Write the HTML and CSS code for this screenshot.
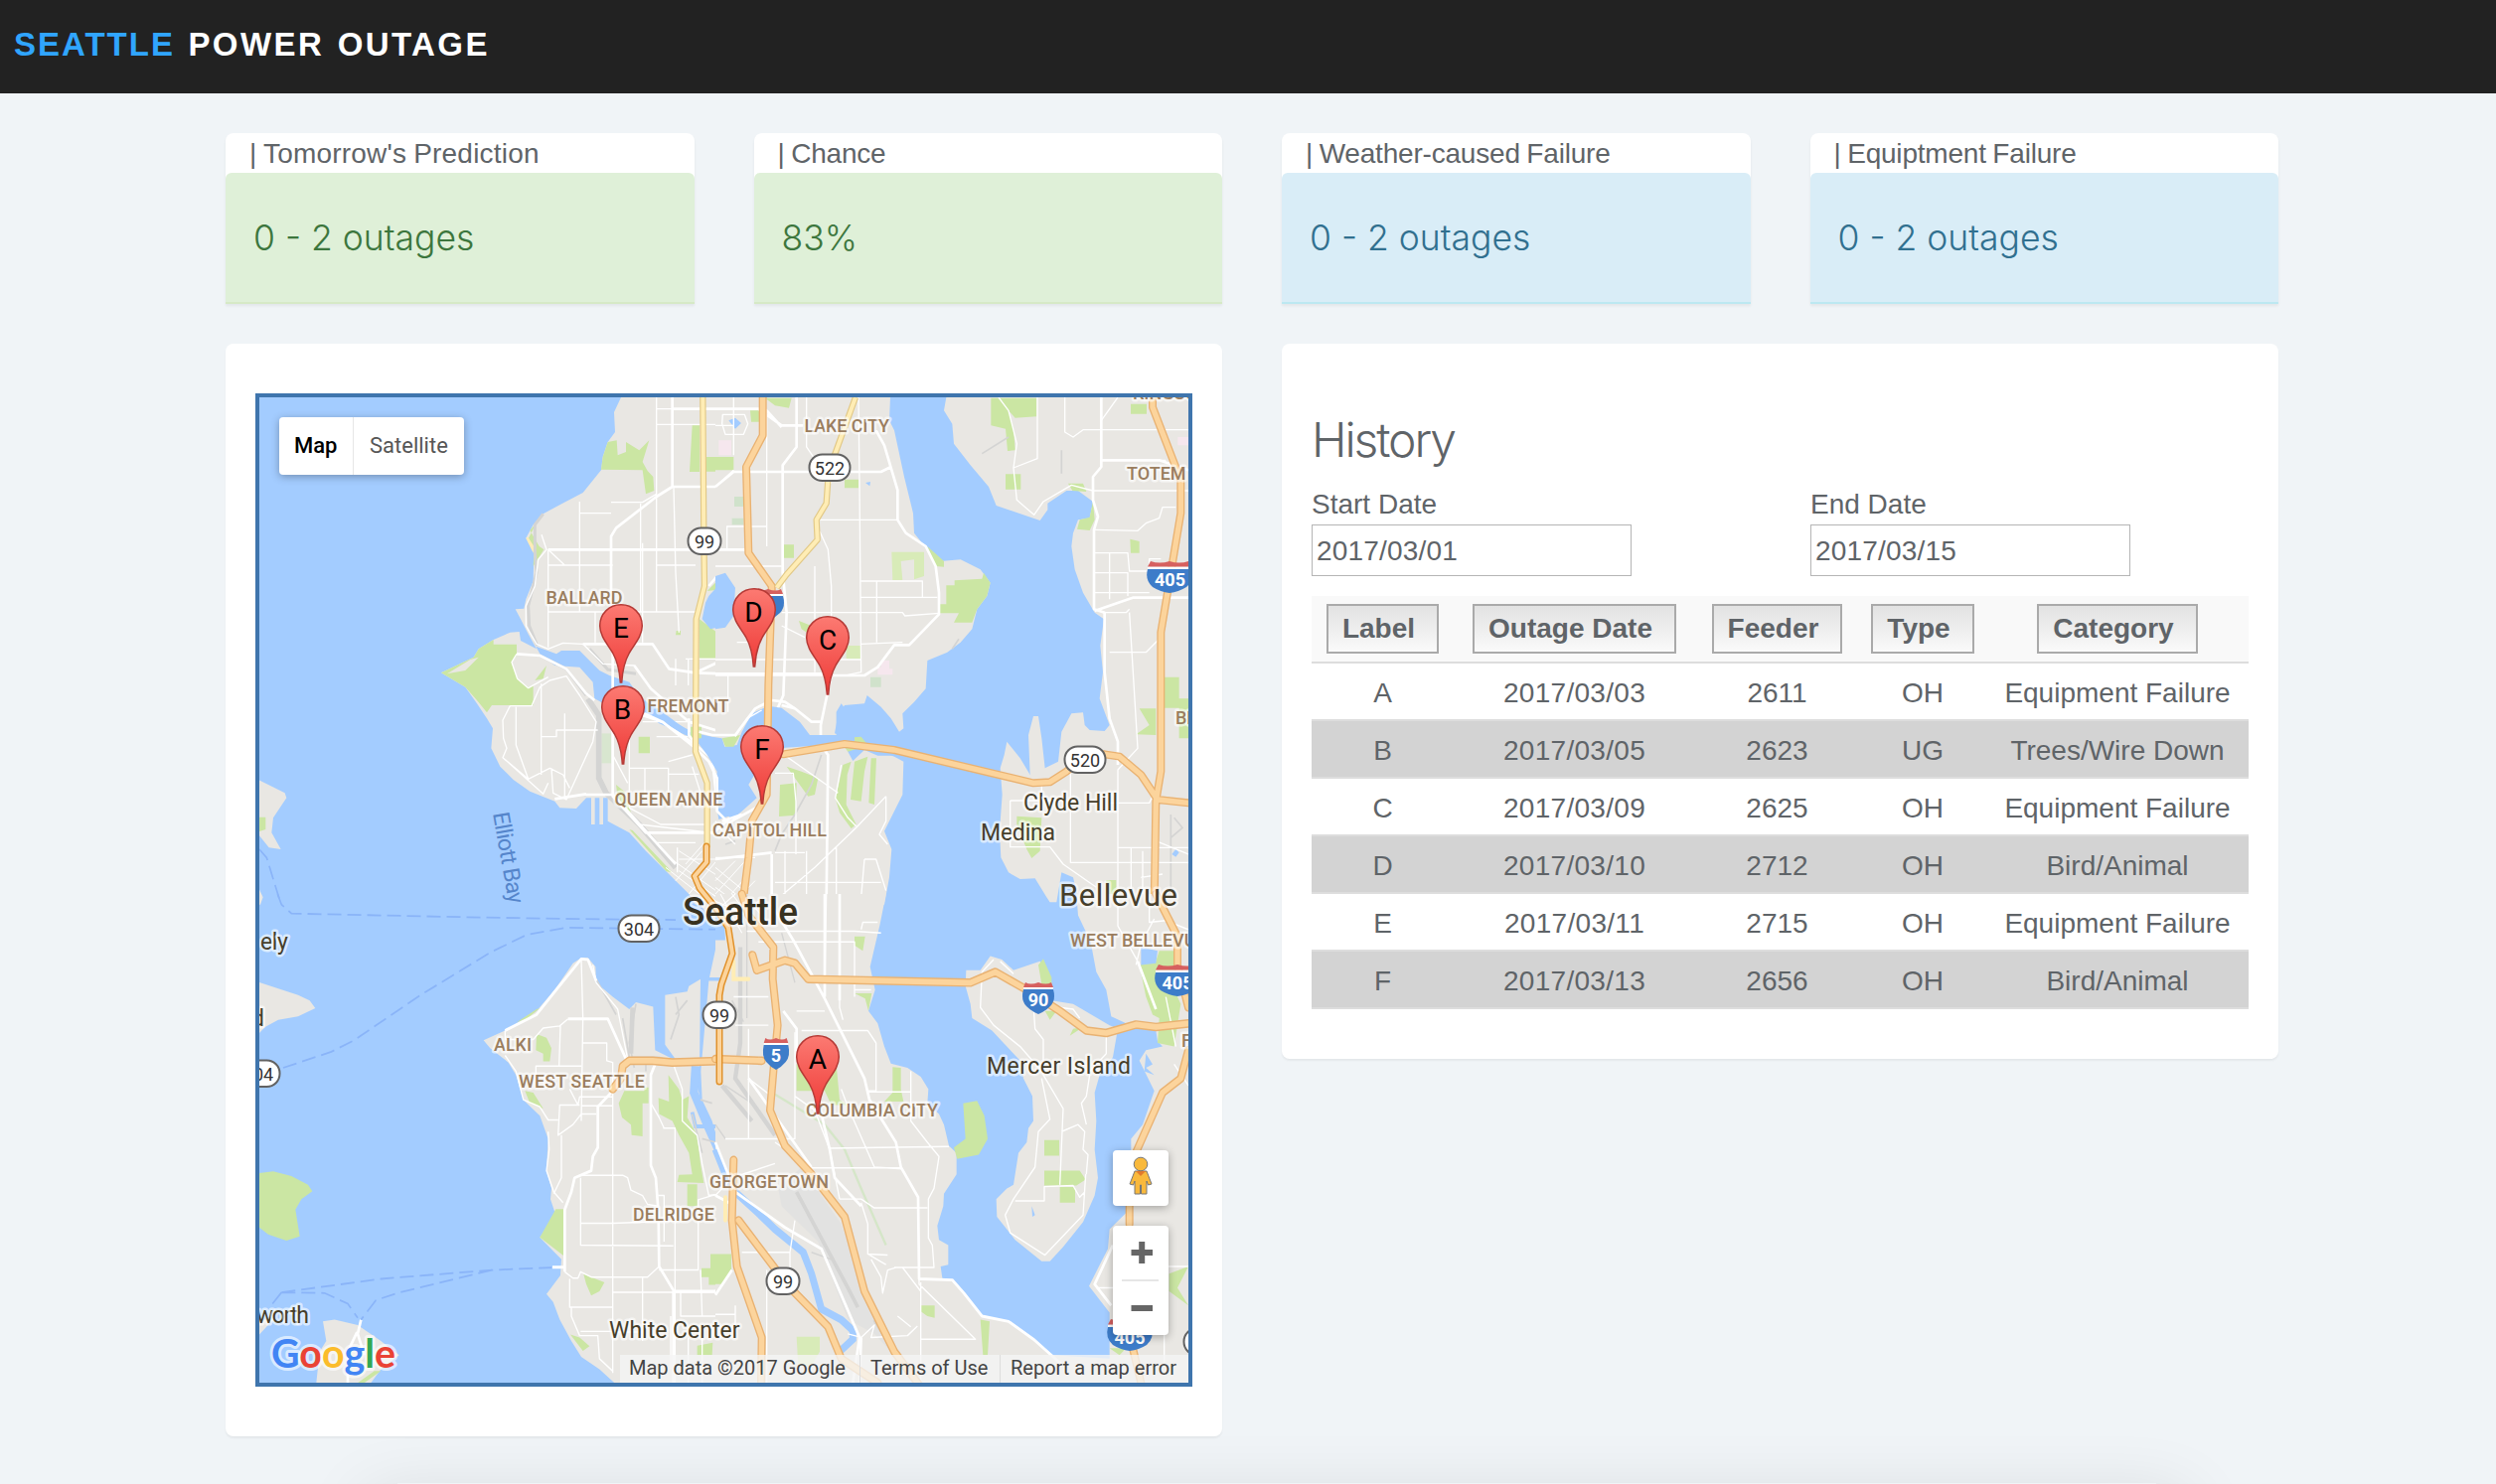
FILE: index.html
```html
<!DOCTYPE html>
<html lang="en">
<head>
<meta charset="utf-8">
<title>Seattle Power Outage</title>
<link rel="stylesheet" href="styles.css">
</head>
<body>
<header class="topbar"><span class="brand"><span class="brand-city">SEATTLE</span> POWER OUTAGE</span></header>
<main class="content">
  <section class="stats">
    <article class="stat"><h2 class="stat-title wide">| Tomorrow's Prediction</h2><p class="stat-value success">0 - 2 outages</p></article>
    <article class="stat"><h2 class="stat-title">| Chance</h2><p class="stat-value success">83%</p></article>
    <article class="stat"><h2 class="stat-title">| Weather-caused Failure</h2><p class="stat-value info">0 - 2 outages</p></article>
    <article class="stat"><h2 class="stat-title">| Equiptment Failure</h2><p class="stat-value info">0 - 2 outages</p></article>
  </section>
  <section class="panels">
    <div class="panel map-panel">
      <div class="map">
        <svg class="map-canvas" viewBox="261 400 935 992" width="935" height="992">
          <defs>
            <linearGradient id="pinFill" x1="0" y1="0" x2="0" y2="1"><stop offset="0" stop-color="#fc7a72"/><stop offset="1" stop-color="#ee3a37"/></linearGradient>
            <g id="pin"><path d="M0 .7C12 .7 21.3 10 21.3 22C21.3 32 14 40 8.500 49C4 57 1.500 66 .7 79H-.7C-1.500 66 -4 57 -8.500 49C-14 40 -21.300 32 -21.300 22C-21.300 10 -12 .7 0 .7Z" fill="url(#pinFill)" stroke="#b53a36" stroke-width="1.500"/></g>
            <g id="shield"><path d="M-15 7Q-18 18 -12 24Q-7 29 0 32Q7 29 12 24Q18 18 15 7Z" fill="#3d7cc9"/><path d="M-15 7V5H15V7Z" fill="#fff"/><path d="M-15 5L-13 0Q-8 3 0 0Q8 3 13 0L15 5Z" fill="#d6605f"/></g>
            <g id="shieldWide"><path d="M-22 8Q-25 19 -17 26Q-9 31 0 32Q9 31 17 26Q25 19 22 8Z" fill="#3d7cc9"/><path d="M-22 8V5.500H22V8Z" fill="#fff"/><path d="M-22 5.500L-19 0Q-10 3 0 0Q10 3 19 0L22 5.500Z" fill="#d6605f"/></g>
          </defs>
          <rect x="261" y="400" width="935" height="992" fill="#a3ccff"/>

          <!-- northwest: Ballard, Magnolia, Queen Anne -->
          <g transform="translate(250 390) scale(.33333)">
            <path class="land" d="M1125 30L1104 75 1107 135 1085 165 1070 210 1065 250 1010 318 940 355 890 382 860 415 838 455 862 500 860 585 838 640 832 668 806 670 822 700 845 745 870 790 822 765 818 738 790 740 740 762 695 790 680 815 582 862 655 905 690 955 720 1000 738 1030 733 1090 760 1145 800 1185 850 1220 925 1250 940 1270 990 1272 1020 1240 1035 1240V1320H1046V1240H1060V1320H1071V1240H1085V1310L1150 1345 1200 1400 1290 1490 1330 1530 1350 1562H1440V30Z"/>
            <path class="land" d="M30 1185L110 1225 115 1240 75 1300 70 1345 98 1395 62 1390 30 1350ZM30 1510L44 1540 36 1562H30Z"/>
            <path class="park" d="M582 862L680 815 695 790 740 762V776H810V810L795 830 812 880 845 905 860 900V960H735L720 982 690 945 655 905ZM1112 160L1085 165 1070 210 1065 248 1190 250 1200 322 1225 312 1222 270 1205 252 1190 225 1210 160 1180 190 1140 165V195L1115 205ZM870 408L850 432 878 480 892 490 860 540 862 500 846 455ZM1340 115H1362V255H1332ZM1383 210H1440V254H1383ZM1362 700L1415 740 1410 818H1362ZM1385 615L1440 560V575L1410 612ZM1178 1055H1212V1105H1178ZM30 1298H52V1335L30 1342ZM865 885L900 840 890 880ZM1292 735H1305V748H1290ZM1110 1200L1135 1220 1155 1285 1140 1280 1115 1240ZM1150 1335L1160 1338 1280 1465 1262 1462Z"/>
            <path d="M1066 1045H1096V1135H1066Z" fill="#d8e6cf"/>
            <path d="M838 455L860 500 862 480 844 452Z" fill="#ffecb8"/>
            <path d="M600 865L670 822 695 815 655 855Z" class="land"/>
            <path d="M868 782L930 805 945 795 1000 795 1035 830 1060 855 1090 870 1150 890 1175 925 1240 985 1330 1035 1320 1050 1240 1015 1160 960 1100 970 1045 940 1040 890 1000 845 925 840 880 805Z" fill="#a3ccff"/>
            <path d="M1390 630L1440 575V720L1395 730 1370 700 1380 650Z" fill="#a3ccff"/>
            <path class="rail" stroke-width="9" d="M890 382L865 415V500L870 560 845 660 848 720 872 780M880 810L960 850 1020 930M1030 790L1085 852 1170 865"/>
            <path class="rail" stroke-width="17" d="M1025 940L1058 990V1180L1080 1225 1180 1320 1290 1450"/>
            <path class="road" d="M1232 30V680M1184 350V680M1000 345V678M1000 380H1095M1095 347H1190L1232 322M1232 65H1280M1232 112H1440M1100 537H905M905 490V785M905 678H1350M1047 678V770M1284 300L1290 560 1300 740M1190 470V770M1320 820H1440M905 490L955 537M1232 537H1350M885 445L900 490 875 520 865 600 838 660 838 720 870 775 905 790 950 772 1010 775 1070 835 1165 840 1215 910M884 895V1170M884 1055H930V1035H1055M930 1035V1055M790 962H855L880 905 910 885 960 872 1000 930 1050 1010 1040 1070 960 1245 920 1225 915 1150M790 962L768 1005 770 1060 780 1090 768 1118 845 1183 910 1150 950 1170 970 1210M808 965V1080L845 1183M810 805L795 830 812 880 845 908 905 875M955 1150V1240M955 985V1150M1100 1110L1145 1195M1150 1055V1270M1150 1150H1268V1240M1268 1130L1340 1110M1197 1150V1250M1232 1055H1330M1268 1168H1360M1150 1270L1245 1320H1390M1232 1375H1350M1180 1320L1440 1350M1295 1390V1465M1290 900V820M1328 820V900M768 1118L890 1228 905 1195M1190 1010H1340M1340 1145L1370 1240"/>
            <path class="road fine" d="M1270 1420L1440 1540M1300 1400L1440 1490M1320 1440L1390 1360M1290 1490L1370 1400M1330 1530L1430 1410M1300 1425H1440M1260 1450L1400 1560M1300 1460L1400 1530"/>
            <path class="road main" d="M1280 30V300L1232 330 1110 425 1095 450V615M1100 690V1235L1200 1345H1440M1280 65H1440M1284 300H1440M905 490H1440M1010 775H1220L1270 850 1350 862 1440 820M1165 840L1215 910 1330 1010 1440 1045M1100 960L1250 1010 1350 1080 1400 1120 1415 1250 1440 1300M810 805L880 810 960 850 1020 925 1045 945M1020 1230H1100L1290 1440M1350 862L1440 865M1390 600L1440 540M1440 200V800M925 1243L1020 1228"/>
            <path class="ferry" d="M33 1395L55 1420 98 1560"/>
          </g>

          <!-- northeast: Lake City, Kirkland, Medina -->
          <g transform="translate(720 390) scale(.33333)">
            <path class="land" d="M0 30H528L525 100 540 130 570 270 597 380 600 440 640 490 680 525 740 520 800 550 830 590 820 630 790 670 775 730 740 770 700 800 640 825 635 910 600 950 565 985 568 1030 555 1040 530 1000 500 965 458 930 450 955 390 960 370 990 360 1045 450 1080 540 1115 568 1130 565 1230 510 1340 532 1395 525 1480 510 1562H0Z"/>
            <path class="land" d="M697 30L690 70 715 110 720 170 770 235 825 300 848 357 980 402 1003 370V350L1060 312H1095L1140 345 1130 395 1095 400 1080 440 1075 480 1085 550 1110 620 1145 680 1173 700 1162 780 1170 860 1160 940 1190 1020 1175 1038 1130 1035 1115 1020 1110 982 1075 985 1045 1040 1035 1130 995 1150 985 1060 975 993H960L945 1050 950 1170 920 1120 880 1070 872 1110 860 1150 866 1230 858 1340 862 1420 885 1465 920 1485 965 1483 1000 1540 1010 1555H1030L1045 1465 1080 1480 1100 1562H1430V30Z"/>
            <path fill="#a3ccff" d="M0 570L30 560 60 605 55 690 30 725 0 730ZM40 100L60 92 78 108 60 125ZM453 288L468 285 466 298ZM1378 1410L1390 1395 1400 1405 1390 1418Z"/>
            <path fill="#a3ccff" d="M400 1070L430 1080 550 1100 560 1112 490 1112 450 1095 415 1128 400 1100Z"/>
            <path class="park" d="M150 32H230L222 62 180 55ZM105 70H132V104H108ZM0 210H55V250H0ZM390 278H432V304H390ZM206 475H237V515H206ZM640 480L690 525V542L665 540ZM722 583L805 578 810 560 830 590 820 630 790 670 775 710H720L735 682H678V655H697V598H722ZM252 705L290 720 305 760 260 730ZM405 780H438V820H400ZM832 32H970V88L905 92 885 70 900 125 905 190 882 192 876 125 832 115ZM876 262H922V308H876ZM1254 50H1302V80H1254ZM1065 290H1110L1120 315 1078 312ZM1140 345L1145 400 1130 432 1092 428 1100 400 1130 392ZM1252 458L1280 465V500H1254ZM1356 875H1400V940H1428V1060H1400V968H1356ZM1280 970H1330V1050L1270 1048 1310 1020ZM215 1145L260 1160 310 1180 300 1230 280 1235ZM195 1200L245 1195 242 1292 192 1296ZM385 1140L410 1130 398 1170 395 1260 425 1320 410 1332 375 1285 362 1240 372 1200ZM420 1130L460 1115 450 1160 440 1250 408 1245ZM470 1120H486L480 1260 463 1255ZM910 1295L985 1300 980 1400 955 1422 940 1395 910 1320ZM370 1060L440 1055 460 1080 400 1100ZM1180 1488H1210V1530H1180ZM1404 1535H1428V1562H1404Z"/>
            <path fill="#d8ebb8" d="M532 497H630V570L600 580V520L560 525 565 582H535ZM395 780H438V820H395Z"/>
            <path fill="#d0e2cb" d="M468 875H500V905H468ZM57 330H85V360H57ZM50 395H85V415H50Z"/>
            <path fill="#f6e7ee" d="M10 160H48V205H10ZM500 825H525V850H535V868H490V845H500ZM1396 150H1428V175H1396Z"/>
            <path class="rail" stroke-width="5" d="M320 1110L290 1200 240 1290 200 1350 180 1400M715 790L735 760M805 200L885 150M1045 190V260M1375 1290V1540M1385 1300L1410 1330 1375 1360M30 1380L60 1370"/>
            <path class="road" d="M55 30V205M55 115H0M155 65V480M22 82H88L98 110 85 142H30L20 110ZM55 250L0 300M155 420H35V490M0 540H200M275 30V180L350 290M432 30L435 290 440 860 400 868M315 400H550M440 585H625V632M440 634H670M200 680H565L572 690 675 682M487 585V770M350 600V860M300 540V860M315 435L340 490 350 600M440 775L565 770M0 822H440M0 870H450M38 870V980M200 720L270 755M65 770H120M180 1165H235L243 1250V1410M215 1115L370 1225M380 1140L362 1240 400 1300 425 1325M515 1235L425 1330 300 1450 170 1560M515 1235V1310L495 1350 520 1380M180 1405H270M0 1420H120M450 1425H485L515 1520M450 1425L440 1540 350 1562M180 1495H500M210 1400V1562M275 1400V1562M365 1390V1562M1055 30V135L1080 150 1110 128H1428M972 30V215L900 243M855 30L885 70 910 170 900 243 910 340 962 385 990 345 1075 295 1140 312H1428M1165 220H1360M1165 100L1215 30M1145 430L1275 433 1300 410 1340 395 1350 362H1390M1145 500H1245L1250 555H1310V518H1345M1190 500V640M1145 560H1245V630M1145 620H1310M1175 680H1240L1250 670M1190 800H1300L1340 760M1250 680L1275 1090 1215 1155V1562M1190 1255H1310L1330 1215M890 1248H1070M890 1248V1388H1010L1050 1440 1150 1510M1072 1160V1435H1428M1215 1390H1428M985 1200V1250M1255 1390V1562M1290 1400V1562M1330 1370L1428 1410M1285 1480L1350 1470"/>
            <path class="road fine" d="M0 1480L100 1562M0 1510L70 1562M0 1450L110 1540M20 1562L100 1470M0 1530L90 1430M50 1562L120 1490M0 1490L60 1430"/>
            <path class="road main" d="M0 65H130L200 115H245V180L203 235V560L215 680 205 930 170 1010M245 30V115M200 115H265M485 130L510 175 550 310V400L575 440 635 480 665 540 675 620V685L585 778H540L490 845 450 870H350L338 925 318 1020V1080L340 1110 335 1560M0 300L55 255H500L530 240M0 490H90M0 865H345M155 70L200 120M200 960L240 970 290 1010 320 1010M170 1410V1560M0 1340L90 1260M1165 30V240L1140 270V340L1155 390 1143 430V670L1175 680V860L1190 1000 1215 1070V1140M1165 220H1340L1428 250M1145 675L1260 635H1428M0 1425L170 1405"/>
          </g>

          <!-- Lake Union and Portage Bay, with the roads along them -->
          <g transform="translate(560 590) scale(.33333)">
            <path fill="#a3ccff" d="M250 350L300 365 400 440 470 455 500 460 508 485 545 480 560 440 590 385 640 362 680 368 735 410 765 450H850L900 470 850 478 690 488 650 520 600 540 598 570 580 600 605 640 560 680 530 705 520 695 490 705 480 640 485 560 455 510 425 470 400 455 300 400Z"/>
            <path fill="#a3ccff" d="M845 470V380L860 355 870 368 900 365V470Z"/>
            <path class="park" d="M500 460L555 450 535 485H510ZM405 425H438V460H405Z"/>
            <path class="road main" d="M430 440L470 450H540L570 410 600 370 650 345 690 350 720 370M265 385L320 410 420 490 460 530 485 580V680L520 715 620 660M400 400V450L420 480M560 690L500 710"/>
            <path class="road" d="M540 455L575 400 620 375M480 710L500 740 540 780"/>
          </g>

          <g transform="translate(720 390) scale(.33333)">
            <path class="orange-edge" d="M143 30V145L93 240 100 500 170 600V620L160 900 158 1040 155 1230 110 1310 100 1420 82 1562M205 1108L390 1077 540 1095 960 1195 1010 1192 1060 1160 1115 1115 1175 1108 1220 1115 1285 1170 1335 1245 1428 1255M1320 30V60L1405 280V380L1365 620 1345 740V1160L1330 1250 1325 1562"/>
            <path class="orange" d="M143 30V145L93 240 100 500 170 600V620L160 900 158 1040 155 1230 110 1310 100 1420 82 1562M205 1108L390 1077 540 1095 960 1195 1010 1192 1060 1160 1115 1115 1175 1108 1220 1115 1285 1170 1335 1245 1428 1255M1320 30V60L1405 280V380L1365 620 1345 740V1160L1330 1250 1325 1562"/>
            <path class="yellow-edge" stroke-linejoin="round" d="M423 30L365 190 342 250 335 350 305 400 308 460 215 565 185 605"/><path class="yellow" d="M423 30L365 190 342 250 335 350 305 400 308 460 215 565 185 605"/>
          </g>
          <g transform="translate(250 390) scale(.33333)">
            <path class="yellow-edge" d="M1372 30L1375 450 1377 600 1352 700 1350 1100 1385 1195V1390"/><path class="yellow" d="M1372 30L1375 450 1377 600 1352 700 1350 1100 1385 1195V1390"/>
          </g>

          <!-- southwest: Elliott Bay, West Seattle -->
          <g transform="translate(250 900) scale(.33333 .35714)">
            <path class="land" d="M1345 0L1385 60 1415 95 1440 115V0ZM1415 135H1440V235H1392ZM710 412L775 385 870 330 925 270 980 195 1005 180H1025L1048 205 1050 250 1100 290 1150 325 1170 305 1222 318 1228 440 1270 460 1320 480 1340 490 1360 560 1365 600 1440 750V1378H1105L1060 1340 1005 1305 975 1260 940 1200 920 1150 900 1128 942 1075 945 1030 880 968 928 905 912 860 915 830 900 780 905 690 880 625 830 580 808 510 785 475 730 435ZM1258 285L1325 275 1330 260 1365 240 1362 490 1310 490 1285 460 1258 425ZM1390 245H1440V770L1400 640 1370 580 1366 500Z"/>
            <path class="land" d="M30 248L150 285 185 300 202 322 150 345 90 355 50 375 30 395ZM225 1205L260 1200 330 1215 400 1260 455 1300 400 1340 370 1378H205L215 1290 235 1260ZM30 1200L75 1200 30 1245Z"/>
            <path class="park" d="M30 787L75 782 130 795 180 820 193 838 160 860 142 890 155 965 115 977 60 960 30 938ZM870 395L900 405 915 435 910 472H890V450L868 440ZM835 555L860 560 890 605 850 590ZM1135 555H1208V590H1190V683L1157 680 1155 650 1128 630 1118 590ZM1268 510L1300 550 1310 580 1330 570 1325 630 1355 680 1365 760 1375 815 1295 812 1300 792 1340 790 1330 730 1300 680 1280 640 1240 620 1238 575 1270 585ZM1325 818H1355V880H1325ZM928 888H952V1020L880 968ZM1012 1072L1075 1095 1060 1120 1035 1132 1020 1100ZM1395 1015H1440V1070H1415V1102H1390V1080H1368V1055H1395ZM972 1242L1000 1250 1030 1275 1010 1288ZM1355 1273L1402 1265 1400 1300H1355ZM380 1345H400L350 1378H330ZM810 362L870 325 880 322 840 352ZM1195 545H1208V590H1195Z"/>
            <path d="M1350 485L1345 560 1385 650 1440 765" fill="none" stroke="#a3ccff" stroke-width="25"/><path d="M1340 615L1350 655H1420" fill="none" stroke="#a3ccff" stroke-width="11"/>
            <path class="rail" stroke-width="5" d="M1170 310L1150 420 1165 490M1155 460H1240L1300 480M1290 290L1300 340 1275 410M1325 300L1290 340M1340 620L1370 730M1200 470V500M1050 240L1110 340M1130 350L1150 460M1365 580L1400 590M1370 690L1410 700"/>
            <path class="rail" stroke-width="14" d="M1160 320L1155 450"/>
            <path class="road" d="M1005 185L1010 350 1005 640M775 385V410H860L890 378 940 372 965 352M942 372L938 485H868V530M868 485H1005M1010 420H1082V470L1100 475V620M970 550L995 595 1000 572H1100M1000 595H940L935 680 980 650 1005 620H1050M1005 597H1100V1350M775 455L808 500 830 580 880 600 905 637H935M905 670L908 720 900 780 922 840 950 870M945 680V800L922 845M1040 200L1050 250 1115 325 1145 465M1005 793H1130L1145 800 1155 835 1190 850 1205 875 1237 880M1003 800V990L1283 992M1005 928H1100L1283 922M1237 850H1255V980M1252 660H1288V1120M1215 590L1240 630 1255 660M1283 480L1310 550V640L1355 680 1370 760 1390 850 1430 845M1358 860V1060H1240M1440 845L1400 850 1358 862M955 1065L980 1083H995L1003 1065 1035 1080H1205L1240 1050M970 1085V1165H1100M975 1165V1190L1000 1245H1055L1060 1310 1100 1345M1100 1123H1440M1190 1080V1260M1190 1235H1100M1288 1120V1378M1305 1125V1190H1440M1275 1190V1340M1365 1060L1370 1190M1328 1250V1378M1370 1250V1378M1420 540V630L1440 680M1003 1233H1100"/>
            <path class="road main" d="M775 385L870 340 925 275 1005 183 1025 185 1050 245M965 352H1085L1140 465M1100 555L1055 600V715L1040 740 1035 780 985 800 975 840 955 890V1065M1230 475L1215 510V765L1230 800 1238 900 1240 1050 1285 1120H1410L1440 1085M918 1052H955M1283 1120V1378M340 1200L330 1240 350 1300M328 1235L300 1290V1378"/>
            <path class="road fine" d="M1380 0L1440 40M1400 0L1440 25M1405 40L1440 0"/>
            <path class="ferry" d="M88 0L100 30 130 55 640 65 960 70 1290 73M105 490L250 445 320 412 520 285 730 165 840 115 960 95 1410 100M100 1123L400 1085 735 1060 915 1053M735 1060L450 1125 385 1145 340 1200M100 1123L230 1125 300 1155 330 1195M100 1123L60 1170"/>
            <path class="orange-edge" d="M1100 550L1125 520 1130 485 1150 470H1220L1280 475 1440 470"/><path class="orange" d="M1100 550L1125 520 1130 485 1150 470H1220L1280 475 1440 470"/>
          </g>

          <!-- southeast: Columbia City, Mercer Island -->
          <g transform="translate(720 900) scale(.33333 .35714)">
            <path class="land" d="M0 0H515L497 85 467 205 482 270 462 330 490 365 510 430 530 478 580 490 620 515 643 550 640 590 675 620 690 650 705 710 728 730V790L690 845 688 880 670 935 675 975 703 990V1045L680 1050 685 1083 715 1088 750 1125 805 1190 885 1205 960 1255 1020 1300 1190 1310V1180L1128 1105 1185 1000 1190 945 1250 890 1255 760V690L1290 650 1325 555 1280 470 1300 440 1350 430 1335 415 1330 385 1240 365 1195 345 1180 270 1150 220 1133 135 1095 60 1090 0H1430V1380H0ZM1000 0H1028L1022 22H1010Z"/>
            <path class="land" d="M757 215H800L830 175 865 185 900 215 980 190 1015 250V300L1080 310 1190 370 1215 380 1200 460 1160 510 1145 560 1150 640 1145 720 1155 800 1145 850 1110 925 1050 995 1010 1035H985L905 975 850 910 848 860 880 830 900 820 915 730 940 700 945 660 960 640 957 570 930 520 920 470 870 420 835 385 775 350 770 310 755 260Z"/>
            <path class="park" d="M748 590L790 583 812 625 822 690 795 735 730 747 720 715 755 690ZM975 200L990 183 1015 235V255H985ZM993 694H1038V738H993ZM993 780H1100L1118 805 1090 822H993ZM1040 826H1086V870H1040ZM420 120H452L445 160 420 145ZM420 280H472L462 330 452 295ZM535 488L560 490V550L568 585H510L535 560ZM245 480H365L375 580 400 595H350L330 555H245ZM620 1160H662V1195L640 1190 618 1175ZM800 1200L828 1205 822 1300H808ZM1340 160H1395V290L1405 310 1385 430 1335 420 1340 350 1320 340 1300 290 1280 200 1330 190ZM1070 400L1080 380 1110 375ZM995 330H1030L1010 355ZM0 1015H48V1060L20 1100H0ZM1370 1070L1428 1050 1395 1110 1428 1160 1370 1120ZM1190 1280H1240L1220 1300Z"/>
            <path fill="#d8ebb8" d="M245 1248H315V1290L290 1330H250Z"/>
            <path fill="none" stroke="#d5e6c8" stroke-width="7" d="M180 565L330 650 390 720 440 830 515 990"/>
            <path fill="#a3ccff" d="M0 35L25 45 30 130 0 130ZM0 235H15V245H0ZM955 880L965 905 957 910ZM1285 150L1335 160 1330 195 1285 200ZM1300 450L1320 480 1300 490 1325 510 1295 500Z"/>
            <path fill="none" stroke="#a3ccff" stroke-width="21" d="M0 720L30 790 60 840 130 900 180 945 265 1010 290 1070 320 1170 380 1200 415 1230V1255L375 1290"/>
            <path class="rail" stroke-width="13" d="M75 150V420L60 520 180 680M20 540L110 640"/>
            <path fill="#e2e2e1" d="M190 830L260 770 380 930 470 1170 540 1300 480 1240 400 1200 310 980 200 880Z"/>
            <path class="rail" stroke-width="11" d="M245 840L400 1110 430 1165M480 1200L540 1290"/>
            <path class="rail" stroke-width="4" d="M95 0V350M50 300L85 360M30 540L110 590M0 650L30 690M290 1010L350 1030M200 110L240 250"/>
            <path class="road" d="M335 0L330 270M375 0V320L385 355M95 105H420L500 110M130 135H420V290M245 330H330M420 270H470M440 100L445 80 490 80M260 385H460L485 420V555H460M55 290H160M60 370H160M100 380V690M100 520L170 570M240 390V690H30M240 570L300 610 345 720 375 860M380 550L400 600 480 770 565 775M460 558H590M590 500V640L640 700 675 740 660 830 643 860V970L655 990 660 1053H540M345 717L705 712M290 772H560M180 700L290 770M375 860H440L480 885H640M440 870L460 930V1015L520 1018M545 1053L520 1060 505 1125 500 1080 470 1030M460 1015L515 1045M0 850L50 800 180 760M240 920L225 1010V1060M80 1010H225M155 1060V1378M60 1160V1250M0 1185H60M615 1050V1100L785 1255H620M620 1095V1378M440 1250L480 1215 470 1250 580 1245 610 1218M565 1053L620 1120M550 1190L590 1220M400 1240L440 1250M960 310L965 380 990 410V510L1050 605 1040 820M985 520L1010 635 975 670 965 770 900 860 875 905 890 955 995 1018 1110 905 1118 790M805 220L800 320 840 370 920 430 985 500M840 185L805 220M860 190L900 225M905 865H993V825L1080 822 1100 855 1115 840M1045 670L1095 650 1115 670 1110 720 1125 735 1120 790M1130 510L1120 570 1105 590 1120 650M1180 400V450L1130 500M1040 320L1080 325 1100 350M1215 0V90L1275 190M1325 70L1285 140 1270 200M1310 0V80L1360 75 1428 100M1150 1110H1200M1360 1050H1428M1355 1240V1320M1360 290L1390 430M1385 480L1428 540"/>
            <path class="road fine" d="M0 20L100 60M0 50L60 0M15 0L80 110M40 90L130 20M80 0L160 80M50 0L140 110"/>
            <path class="road main" d="M170 30L235 130 330 295 450 520 465 580 545 700 560 770 612 855 615 1085 715 1088 750 1125 805 1190 885 1205 960 1255 1050 1330M330 0V290M100 520L290 770M205 330L245 380V460M315 600L345 720 360 800 440 880M0 700L60 840 210 940 320 1000 435 1250 415 1378M375 0V300M1275 190L1330 325M50 1060L0 1130M1200 990L1145 1100 1195 1160M440 1250L435 1378M0 850L60 880"/>
            <path class="orange-edge" d="M80 0L100 60 175 150 173 240 188 370 175 500 165 610 210 710 290 790 390 910 450 1120 540 1290 620 1390M112 172L125 215 210 187 240 195 280 240 770 250 845 220 940 270 1040 330 1120 385 1180 392 1270 368 1330 375 1428 365M0 465L140 470M55 750L50 920 65 1050 140 1250 138 1378M70 920L220 1105 340 1220 380 1310 490 1378M1330 0L1395 120V200L1428 320M1428 440L1405 520 1350 560 1250 770V930M1260 1280L1285 1378"/>
            <path class="orange" d="M80 0L100 60 175 150 173 240 188 370 175 500 165 610 210 710 290 790 390 910 450 1120 540 1290 620 1390M112 172L125 215 210 187 240 195 280 240 770 250 845 220 940 270 1040 330 1120 385 1180 392 1270 368 1330 375 1428 365M0 465L140 470M55 750L50 920 65 1050 140 1250 138 1378M70 920L220 1105 340 1220 380 1310 490 1378M1330 0L1395 120V200L1428 320M1428 440L1405 520 1350 560 1250 770V930M1260 1280L1285 1378"/>
            <path class="yellow" stroke-linecap="round" d="M55 190V240H100M30 855V920"/>
          </g>

          <!-- waterfront highway -->
          <path class="viaduct-edge" d="M711 852V868L699 882 704 894 721 915 733 934 737 960 726 991 724 1002V1089"/>
          <path class="viaduct" d="M711 852V868L699 882 704 894 721 915 733 934 737 960 726 991 724 1002V1089"/>

          <g class="district">
            <text x="549.5" y="608" textLength="77">BALLARD</text>
            <text x="651.500" y="717" textLength="82">FREMONT</text>
            <text x="618.500" y="811" textLength="109">QUEEN ANNE</text>
            <text x="717" y="842" textLength="115">CAPITOL HILL</text>
            <text x="809.500" y="435" textLength="85.500">LAKE CITY</text>
            <text x="1134" y="483">TOTEM LAKE</text>
            <text x="1140" y="401.500">KINGSGATE</text>
            <text x="1183" y="729">BEL-RED</text>
            <text x="1077" y="953">WEST BELLEVUE</text>
            <text x="1189" y="1053.500">FACTORIA</text>
            <text x="811" y="1124" textLength="133">COLUMBIA CITY</text>
            <text x="714" y="1196" textLength="120">GEORGETOWN</text>
            <text x="637" y="1229" textLength="82">DELRIDGE</text>
            <text x="522" y="1095" textLength="127">WEST SEATTLE</text>
            <text x="497" y="1057.500" textLength="38">ALKI</text>
          </g>
          <g class="town">
            <text x="1030" y="815.500" textLength="95">Clyde Hill</text>
            <text x="987" y="845.500" textLength="75">Medina</text>
            <text x="993" y="1081" textLength="145">Mercer Island</text>
            <text x="613" y="1347" textLength="131.500">White Center</text>
            <text x="262" y="956" textLength="28">ely</text>
            <text x="253" y="1033">d</text>
            <text x="258" y="1332" textLength="53">worth</text>
            <text class="suburb" x="1066" y="912" textLength="119">Bellevue</text>
            <text class="city" x="687" y="931" textLength="116" lengthAdjust="spacingAndGlyphs">Seattle</text>
          </g>
          <text class="bay" transform="translate(496 819) rotate(80)" textLength="93">Elliott Bay</text>

          <g class="route">
            <rect x="692.500" y="531.500" width="33" height="26.500" rx="13"/><text x="709" y="552">99</text>
            <rect x="814.500" y="457.500" width="41" height="26.500" rx="13"/><text x="835" y="478">522</text>
            <rect x="1071.500" y="751.500" width="41" height="26.500" rx="13"/><text x="1092" y="772">520</text>
            <rect x="622.500" y="921.500" width="41" height="26.500" rx="13"/><text x="643" y="942">304</text>
            <rect x="707.500" y="1008.500" width="33" height="26.500" rx="13"/><text x="724" y="1029">99</text>
            <rect x="771.500" y="1276.500" width="33" height="26.500" rx="13"/><text x="788" y="1297">99</text>
            <rect x="240.500" y="1067.500" width="41" height="26.500" rx="13"/><text x="260" y="1088">304</text>
            <rect x="1191.500" y="1337.500" width="41" height="26.500" rx="13"/>
          </g>
          <g class="interstate">
            <use href="#shieldWide" x="1177" y="565"/><text x="1177.500" y="589.500">405</text>
            <use href="#shieldWide" x="1185" y="971"/><text x="1185" y="995.500">405</text>
            <use href="#shieldWide" x="1137" y="1328"/><text x="1137" y="1352.500">405</text>
            <use href="#shield" x="1045" y="989"/><text x="1045" y="1013">90</text>
            <use href="#shield" x="773" y="593"/>
            <g transform="translate(781 1045) scale(.82 1)"><use href="#shield"/></g><text x="781" y="1069">5</text>
          </g>
          <g class="pins">
            <use href="#pin" x="759" y="592"/><text x="758.500" y="626">D</text>
            <use href="#pin" x="625" y="608"/><text x="625" y="642">E</text>
            <use href="#pin" x="833" y="620"/><text x="833" y="654">C</text>
            <use href="#pin" x="627" y="690"/><text x="626.500" y="724">B</text>
            <use href="#pin" x="767" y="730"/><text x="767" y="764">F</text>
            <use href="#pin" x="823" y="1042"/><text x="823" y="1076">A</text>
          </g>
          <text class="logo" x="273" y="1377" textLength="125" lengthAdjust="spacingAndGlyphs"><tspan fill="#4285f4">G</tspan><tspan fill="#ea4335">o</tspan><tspan fill="#fbbc2c">o</tspan><tspan fill="#4285f4">g</tspan><tspan fill="#34a853">l</tspan><tspan fill="#ea4335">e</tspan></text>
        </svg>
        <div class="map-type"><span class="type-map">Map</span><span class="type-sat">Satellite</span></div>
        <div class="map-controls">
          <div class="pegman">
            <svg width="24" height="40" viewBox="0 0 24 40"><path d="M6 15H18L23 28 19.500 29 18 25V38H12.500V29H11.500V38H6V25L4.500 29 1 28Z" fill="#f9b93c" stroke="#777" stroke-width="1"/><path d="M7 15H17L12 20Z" fill="#e27a2c"/><circle cx="12" cy="8" r="6.800" fill="#f9b93c" stroke="#777" stroke-width="1"/></svg>
          </div>
          <div class="zoom">
            <svg width="56" height="110" viewBox="0 0 56 110"><path d="M18.500 27H40M29.200 16V38M18.500 83H40" stroke="#666" stroke-width="6"/><path d="M9 55H46" stroke="#e6e6e6" stroke-width="2"/></svg>
          </div>
        </div>
        <div class="map-legal"><span class="legal-data">Map data ©2017 Google</span><span class="legal-terms">Terms of Use</span><span class="legal-report">Report a map error</span></div>
      </div>
    </div>
    <div class="panel history">
      <h1 class="history-title">History</h1>
      <form class="dates">
        <label class="date">Start Date<input class="date-input" type="text" value="2017/03/01"></label>
        <label class="date">End Date<input class="date-input" type="text" value="2017/03/15"></label>
      </form>
      <table class="outages">
        <colgroup><col class="col-label"><col class="col-date"><col class="col-feeder"><col class="col-type"><col class="col-cat"></colgroup>
        <thead><tr><th><span class="sort">Label</span></th><th><span class="sort">Outage Date</span></th><th><span class="sort">Feeder</span></th><th><span class="sort">Type</span></th><th><span class="sort">Category</span></th></tr></thead>
        <tbody>
          <tr><td>A</td><td>2017/03/03</td><td>2611</td><td>OH</td><td>Equipment Failure</td></tr>
          <tr><td>B</td><td>2017/03/05</td><td>2623</td><td>UG</td><td>Trees/Wire Down</td></tr>
          <tr><td>C</td><td>2017/03/09</td><td>2625</td><td>OH</td><td>Equipment Failure</td></tr>
          <tr><td>D</td><td>2017/03/10</td><td>2712</td><td>OH</td><td>Bird/Animal</td></tr>
          <tr><td>E</td><td>2017/03/11</td><td>2715</td><td>OH</td><td>Equipment Failure</td></tr>
          <tr><td>F</td><td>2017/03/13</td><td>2656</td><td>OH</td><td>Bird/Animal</td></tr>
        </tbody>
      </table>
    </div>
  </section>
</main>
<div class="bottom-shade"></div>
</body>
</html>
```
FILE: styles.css
```css
* { box-sizing: border-box; }
body {
  margin: 0;
  height: 1494px;
  position: relative;
  overflow: hidden;
  background: #f0f4f7;
  color: #5f6468;
  font: 28px/40px "Liberation Sans", Arial, sans-serif;
}
.topbar { height: 94px; background: #222; padding: 25px 14px; }
.brand { display: block; font-size: 33px; line-height: 40px; font-weight: bold; letter-spacing: 2.4px; word-spacing: 2px; color: #fff; white-space: nowrap; }
.brand-city { color: #30a5ff; letter-spacing: 2px; }
.content { width: 2066px; margin: 40px 0 0 227px; }
.stats { display: grid; grid-template-columns: repeat(4, 1fr); gap: 60px; }
.stat { background: #fff; border-radius: 8px 8px 0 0; box-shadow: 0 2px 3px rgba(0, 0, 0, .06); }
.stat-title { margin: 0; padding: 1px 24px 0; height: 40px; line-height: 40px; font-size: 28px; font-weight: normal; letter-spacing: -.2px; word-spacing: -1px; }
.stat-title.wide { letter-spacing: .2px; }
.stat-value { margin: 0; height: 132px; padding: 0 28px; line-height: 131px; font-family: Inter, "Liberation Sans", sans-serif; font-weight: 300; font-size: 35.5px; letter-spacing: 0; border-radius: 6px 6px 0 0; border-bottom: 2px solid; }
.success { color: #3c763d; background: #dff0d8; border-color: #d6e9c6; }
.info { color: #31708f; background: #d9edf7; border-color: #bce8f1; }
.panels { display: grid; grid-template-columns: 1fr 1fr; gap: 60px; align-items: start; margin-top: 40px; }
.panel { background: #fff; border-radius: 8px; box-shadow: 0 2px 2px rgba(0, 0, 0, .05); padding: 50px 30px; }
.map { position: relative; width: 943px; height: 1000px; border: 4px solid #3f75ad; overflow: hidden; }
.map-canvas { display: block; font-family: Roboto, sans-serif; }

.land { fill: #e9e7e3; }
.park { fill: #cbe6a3; }
.road { fill: none; stroke: #fff; stroke-width: 4; stroke-linejoin: round; }
.road.main { stroke-width: 8; }
.road.fine { stroke-width: 3; }
.rail { fill: none; stroke: #d4d4d3; }
.ferry { fill: none; stroke: #8ab4f8; stroke-width: 5; stroke-dasharray: 42 18; }
.orange-edge { fill: none; stroke: #e9b272; stroke-width: 24; stroke-linejoin: round; stroke-linecap: round; }
.orange { fill: none; stroke: #fcd49c; stroke-width: 16; stroke-linejoin: round; stroke-linecap: round; }
.yellow-edge { fill: none; stroke: #e2c987; stroke-width: 19; }
.yellow { fill: none; stroke: #ffedb5; stroke-width: 12; }
.viaduct-edge { fill: none; stroke: #e1922c; stroke-width: 7; stroke-linejoin: round; stroke-linecap: round; }
.viaduct { fill: none; stroke: #fcd49c; stroke-width: 4; stroke-linejoin: round; stroke-linecap: round; }

.district text, .town text { stroke: rgba(255, 255, 255, .6); stroke-width: 5px; stroke-linejoin: round; paint-order: stroke; }
.district { font-size: 18px; font-weight: 500; fill: #9a7d5e; }
.town { font-size: 23px; fill: #463e2b; }
.town .suburb { font-size: 31px; }
.town .city { font-size: 38px; font-weight: 500; fill: #38311f; }
.bay { font-size: 23px; fill: #5585cb; }
.route rect { fill: #fff; stroke: #626262; stroke-width: 2; }
.route text { font-size: 18px; fill: #333; text-anchor: middle; }
.interstate text { font-size: 18px; font-weight: 700; fill: #fff; text-anchor: middle; }
.pins text { font-size: 28px; fill: #000; text-anchor: middle; }
.logo { font: 700 41px Lato, sans-serif; stroke: rgba(255, 255, 255, .6); stroke-width: 6px; stroke-linejoin: round; paint-order: stroke; }

.map-type { position: absolute; left: 20px; top: 20px; display: flex; width: 186px; height: 58px; background: #fff; border-radius: 4px; box-shadow: 0 2px 8px rgba(0, 0, 0, .3); font: 22px/58px Roboto, sans-serif; color: #565656; }
.type-map { width: 75px; padding-left: 15px; font-weight: 500; color: #000; border-right: 1px solid #e6e6e6; }
.type-sat { padding-left: 16px; }
.map-controls { position: absolute; right: 20px; top: 758px; display: flex; flex-direction: column; gap: 20px; }
.pegman, .zoom { width: 56px; background: #fff; border-radius: 4px; box-shadow: 0 2px 8px rgba(0, 0, 0, .3); }
.pegman { height: 56px; display: flex; justify-content: center; padding-top: 6px; }
.zoom { height: 110px; }
.zoom svg { display: block; }
.map-legal { position: absolute; right: 0; bottom: 0; display: flex; width: 572px; height: 28px; background: rgba(245, 245, 245, .78); font: 20px/27px Roboto, sans-serif; color: #444; white-space: nowrap; }
.legal-data { width: 241px; padding-left: 9px; }
.legal-terms { width: 141px; padding-left: 10px; border-left: 1px solid #ddd; }
.legal-report { padding-left: 10px; border-left: 1px solid #ddd; }

.history { height: 720px; padding-top: 65px; }
.history-title { margin: 0; font-family: Inter, "Liberation Sans", sans-serif; font-size: 48px; line-height: 63px; font-weight: 300; letter-spacing: -2.1px; }
.dates { display: grid; grid-template-columns: 502px 1fr; margin: 14px 0 20px; }
.date { display: flex; flex-direction: column; line-height: 40px; }
.date-input { width: 322px; height: 52px; margin-top: 0; padding: 1px 4px 0; border: 1px solid #b5b5b5; background: #fff; color: #5f6468; font: 28px "Liberation Sans", Arial, sans-serif; letter-spacing: .2px; }
.outages { width: 943px; table-layout: fixed; border-collapse: separate; border-spacing: 0; text-align: center; border-bottom: 2px solid #ddd; white-space: nowrap; }
.col-label { width: 143px; }
.col-date { width: 243px; }
.col-feeder { width: 165px; }
.col-type { width: 128px; }
.col-cat { width: 264px; }
.outages th { height: 66px; padding: 0; background: #f9f9f9; font-weight: bold; }
.sort { display: inline-block; height: 50px; padding: 1px 22px 0 14px; line-height: 43px; border: 2px solid #aaa; background: linear-gradient(#e2e2e2, #fafafa); vertical-align: middle; }
.outages td { height: 58px; padding: 3px 0 0; border-top: 2px solid #ddd; }
.outages td:nth-child(2) { letter-spacing: .3px; }
.outages tbody tr:nth-child(even) { background: #d3d3d3; }

.bottom-shade { position: absolute; left: 400px; bottom: 0; width: 1770px; height: 1px; box-shadow: 0 45px 70px 30px rgba(0, 0, 0, .12); }
```
